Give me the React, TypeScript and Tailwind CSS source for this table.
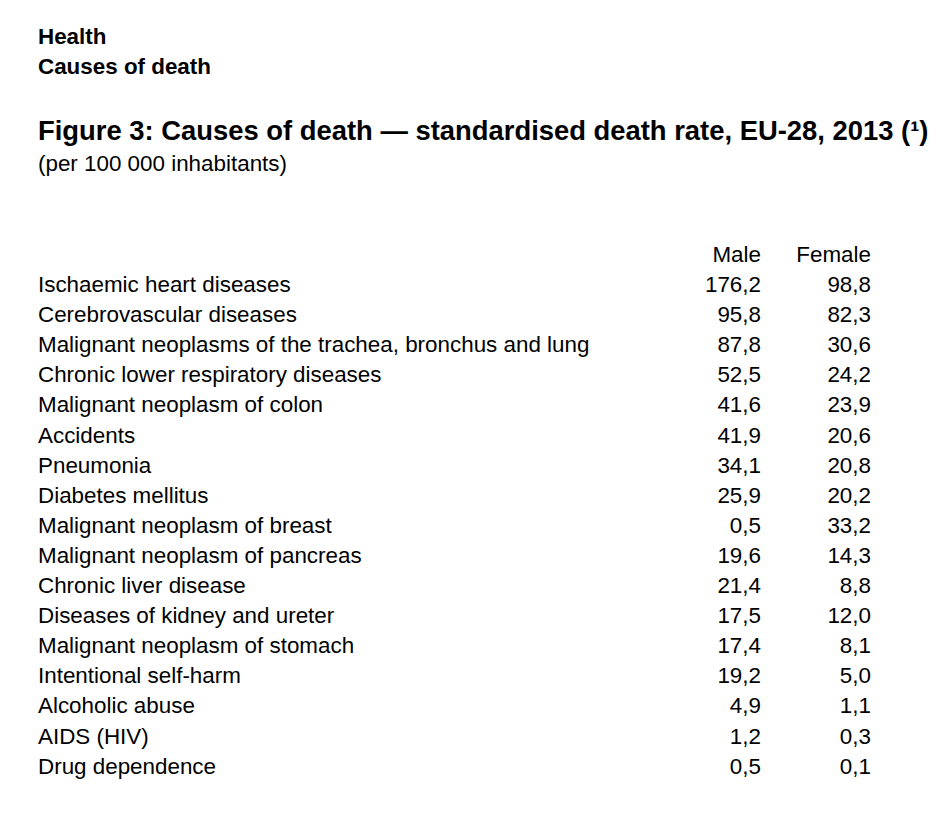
const rows: [string, string, string][] = [
  ['Ischaemic heart diseases', '176,2', '98,8'],
  ['Cerebrovascular diseases', '95,8', '82,3'],
  ['Malignant neoplasms of the trachea, bronchus and lung', '87,8', '30,6'],
  ['Chronic lower respiratory diseases', '52,5', '24,2'],
  ['Malignant neoplasm of colon', '41,6', '23,9'],
  ['Accidents', '41,9', '20,6'],
  ['Pneumonia', '34,1', '20,8'],
  ['Diabetes mellitus', '25,9', '20,2'],
  ['Malignant neoplasm of breast', '0,5', '33,2'],
  ['Malignant neoplasm of pancreas', '19,6', '14,3'],
  ['Chronic liver disease', '21,4', '8,8'],
  ['Diseases of kidney and ureter', '17,5', '12,0'],
  ['Malignant neoplasm of stomach', '17,4', '8,1'],
  ['Intentional self-harm', '19,2', '5,0'],
  ['Alcoholic abuse', '4,9', '1,1'],
  ['AIDS (HIV)', '1,2', '0,3'],
  ['Drug dependence', '0,5', '0,1'],
];

export default function App() {
  return (
    <div className="min-h-screen bg-white text-black font-['Liberation_Sans',Arial,sans-serif] pl-[38px] pt-[22px]">
      {/* Breadcrumb */}
      <div className="text-[22.4px] leading-[30px] font-bold">
        <div>Health</div>
        <div>Causes of death</div>
      </div>

      {/* Title */}
      <h1 className="mt-[32px] text-[27.4px] leading-[33px] font-bold whitespace-nowrap">
        Figure 3: Causes of death — standardised death rate, EU-28, 2013 (¹)
      </h1>
      <p className="mt-[2px] text-[22.4px] leading-[30px]">(per 100 000 inhabitants)</p>

      {/* Table */}
      <div className="mt-[61px] grid grid-cols-[613px_110px_110px] text-[22.4px] leading-[30.1px]">
        <div />
        <div className="text-right">Male</div>
        <div className="text-right">Female</div>
        {rows.map(([label, male, female]) => (
          <div key={label} className="contents">
            <div className="whitespace-nowrap">{label}</div>
            <div className="text-right">{male}</div>
            <div className="text-right">{female}</div>
          </div>
        ))}
      </div>
    </div>
  );
}
